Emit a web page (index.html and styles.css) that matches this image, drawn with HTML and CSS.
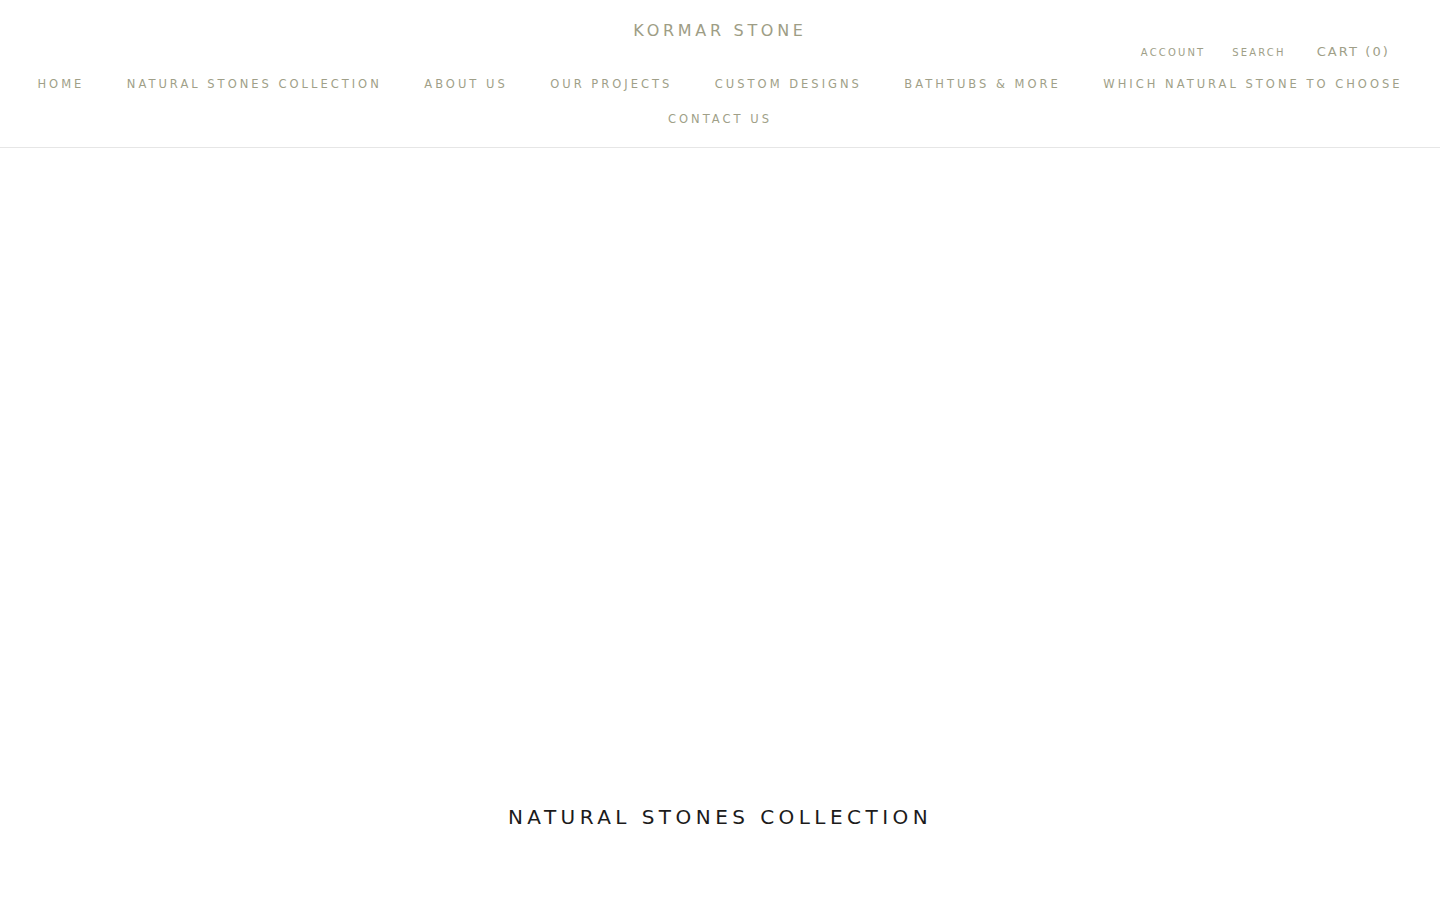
FILE: index.html
```html
<!DOCTYPE html>
<html lang="en">
<head>
<meta charset="utf-8">
<title>Kormar Stone</title>
<link rel="stylesheet" href="styles.css">
</head>
<body>
<header class="header">
  <div class="header-top">
    <a class="logo" href="#">KORMAR STONE</a>
    <div class="header-actions">
      <a class="action" href="#">ACCOUNT</a>
      <a class="action" href="#">SEARCH</a>
      <a class="action cart" href="#">CART (0)</a>
    </div>
  </div>
  <nav class="nav">
    <a class="nav-item" href="#">HOME</a>
    <a class="nav-item" href="#">NATURAL STONES COLLECTION</a>
    <a class="nav-item" href="#">ABOUT US</a>
    <a class="nav-item" href="#">OUR PROJECTS</a>
    <a class="nav-item" href="#">CUSTOM DESIGNS</a>
    <a class="nav-item" href="#">BATHTUBS &amp; MORE</a>
    <a class="nav-item" href="#">WHICH NATURAL STONE TO CHOOSE</a>
    <span class="nav-break"></span>
    <a class="nav-item" href="#">CONTACT US</a>
  </nav>
</header>
<main>
  <section class="hero"></section>
  <section class="collection">
    <h2 class="section-title">NATURAL STONES COLLECTION</h2>
  </section>
</main>
</body>
</html>
```
FILE: styles.css
```css
* { box-sizing: border-box; }
html, body { margin: 0; padding: 0; background: #fff; }
body {
  font-family: "DejaVu Sans", "Open Sans", sans-serif;
  color: #1c1b1b;
}
a { text-decoration: none; color: inherit; }

.header {
  border-bottom: 1px solid #e6e6e6;
  height: 148px;
  color: #a09f88;
}
.header-top {
  position: relative;
  height: 60px;
  display: flex;
  justify-content: center;
  padding-top: 21px;
}
.logo {
  font-size: 16px;
  letter-spacing: 3.7px;
  line-height: 20px;
  color: #9e9d85;
}
.header-actions {
  position: absolute;
  right: 50px;
  top: 43px;
  display: flex;
  align-items: baseline;
  gap: 27px;
}
.action {
  font-size: 10px;
  letter-spacing: 2.15px;
  line-height: 18px;
}
.cart {
  font-size: 13px;
  letter-spacing: 2.1px;
  margin-left: 4px;
}
.nav {
  display: flex;
  flex-wrap: wrap;
  justify-content: center;
  column-gap: 42.5px;
  row-gap: 8.5px;
  padding: 15px 0 0;
}
.nav-item {
  font-size: 11.5px;
  letter-spacing: 3px;
  line-height: 18px;
}
.nav-break { flex-basis: 100%; height: 0; }

.hero { height: 630px; }
.collection {
  display: flex;
  justify-content: center;
  padding-top: 25px;
}
.section-title {
  margin: 0;
  font-weight: 400;
  font-size: 20px;
  letter-spacing: 4.45px;
  line-height: 28px;
  color: #1c1b1b;
}
```
